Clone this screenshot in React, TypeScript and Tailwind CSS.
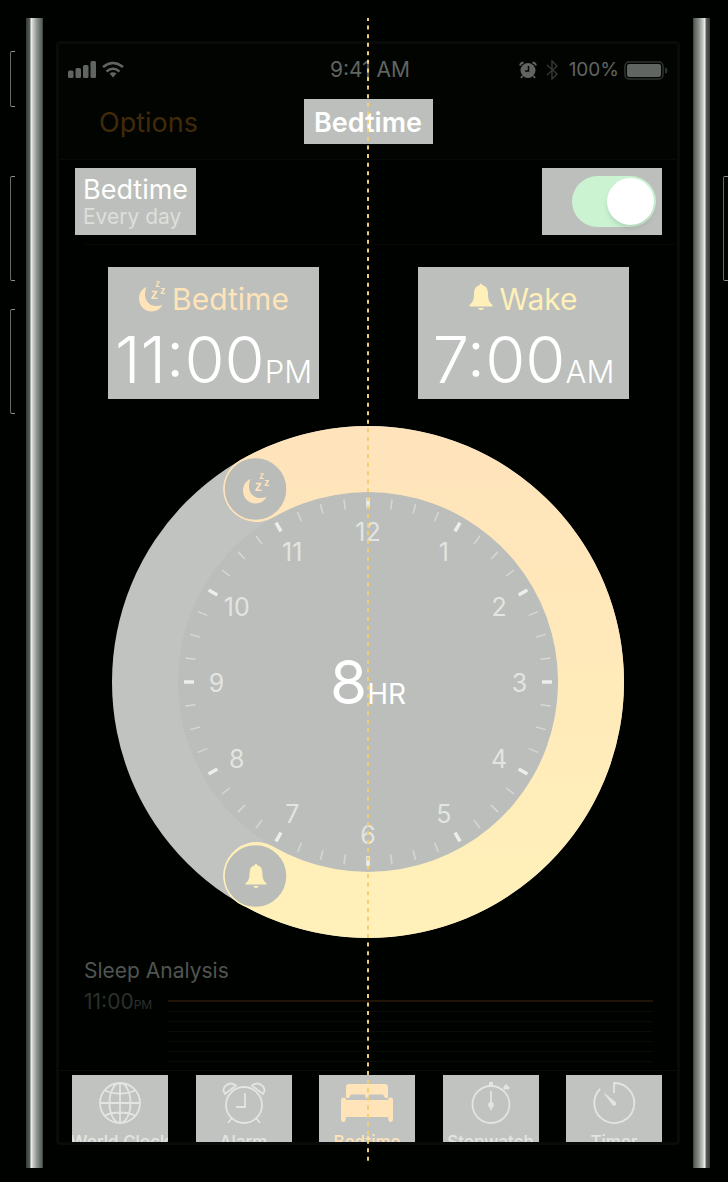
import React from "react";

const HOURS = [12, 1, 2, 3, 4, 5, 6, 7, 8, 9, 10, 11];

function Moon({ className }: { className: string }) {
  return (
    <svg viewBox="0 0 28 32" className={className} fill="currentColor" aria-hidden="true">
      <path d="M8.500 7C3.500 9 1 13.500 1 18.500C1 26 6.500 31.500 13.500 31.500C18.500 31.500 22.500 29 24.500 24.800C22.500 25.600 20.500 26 18.500 26C11.800 26 7 21.200 7 14.500C7 11.800 7.500 9.500 8.500 7Z" />
      <path d="M13.700 10.800H19.300V12L15.700 17.500H19.500V19H13.300V17.700L17 12.200H13.700ZM18 1.200H21.700V2.100L19.300 5.900H21.800V6.900H17.700V6L20.200 2.200H18ZM22.900 8H27V9L24.500 12.800H27.200V13.900H22.600V12.900L25.200 9.100H22.900Z" />
    </svg>
  );
}

function Bell({ className }: { className: string }) {
  return (
    <svg viewBox="0 0 24 28" className={className} fill="currentColor" aria-hidden="true">
      <path d="M12 .8c.9 0 1.500.6 1.500 1.500 3.600.8 5.200 3.600 5.400 7.200.3 6.500.5 9.300 4.600 12.300v1.600H.5v-1.600c4.100-3 4.300-5.800 4.600-12.300.2-3.600 1.800-6.400 5.400-7.200 0-.9.600-1.500 1.500-1.500Z" />
      <path d="M9 25h6c-.3 1.300-1.500 2-3 2s-2.700-.7-3-2Z" />
    </svg>
  );
}

function TimeCard({ icon, title, time, suffix, tone }: { icon: React.ReactNode; title: string; time: string; suffix: string; tone: string }) {
  return (
    <section className="flex h-[132px] w-[211px] flex-col items-center bg-[#bcbfbb] pt-[14px]">
      <h2 className={`flex items-center gap-[6px] text-[30px] leading-[36px] ${tone}`}>
        {icon}
        {title}
      </h2>
      <p className="flex items-baseline whitespace-nowrap text-white">
        <span className="text-[65px] font-light leading-[86px]">{time}</span>
        <span className="text-[31px] font-light">{suffix}</span>
      </p>
    </section>
  );
}

function Dial() {
  const point = (angle: number, r: number) => {
    const a = (angle * Math.PI) / 180;
    return [256 + r * Math.sin(a), 256 - r * Math.cos(a)];
  };
  return (
    <div className="relative mx-auto w-full max-w-[512px]">
      <svg viewBox="0 0 512 512" className="block w-full" role="img" aria-label="Sleep from 11 PM to 7 AM">
        <defs>
          <linearGradient id="sleep" x1="0" y1="0" x2="0" y2="1">
            <stop offset="0" stopColor="#ffe3bb" />
            <stop offset="1" stopColor="#fff1b9" />
          </linearGradient>
        </defs>
        <circle cx="256" cy="256" r="256" fill="#c0c3bf" />
        <circle cx="256" cy="256" r="190" fill="#bbbeba" />
        <path
          d="M128 34.300A256 256 0 1 1 128 477.700A33 33 0 0 1 161 420.500A190 190 0 1 0 161 91.500A33 33 0 0 1 128 34.300Z"
          fill="url(#sleep)"
        />
        <circle cx="143.500" cy="63" r="31.500" fill="#b9bcb8" stroke="#ffe4bb" strokeWidth="1.500" />
        <circle cx="143.500" cy="450" r="31.500" fill="#b9bcb8" stroke="#fff0b9" strokeWidth="1.500" />
        {Array.from({ length: 48 }, (_, i) => {
          const major = i % 4 === 0;
          const [x1, y1] = point(i * 7.5, 184);
          const [x2, y2] = point(i * 7.5, 174);
          return <line key={i} x1={x1} y1={y1} x2={x2} y2={y2} stroke={major ? "#eceeeb" : "#d5d8d4"} strokeWidth={major ? 3.5 : 1.5} />;
        })}
        {HOURS.map((hour, i) => {
          const [x, y] = point(i * 30, 151.5);
          return (
            <text key={hour} x={x} y={y + 10} textAnchor="middle" fontSize="25" fill="#e2e5e1">
              {hour}
            </text>
          );
        })}
      </svg>
      <p className="absolute inset-0 flex items-center justify-center text-white">
        <span className="flex items-baseline">
          <span className="text-[60px] leading-[72px]">8</span>
          <span className="text-[28px]">HR</span>
        </span>
      </p>
      <Moon className="absolute left-[130px] top-[46px] h-[32px] w-[28px] text-[#ffe4bb]" />
      <Bell className="absolute left-[133px] top-[437px] h-[26px] w-[22px] text-[#fff0b9]" />
    </div>
  );
}

const line = { fill: "none", stroke: "currentColor", strokeWidth: 1.8 };

const TABS = [
  {
    label: "World Clock",
    tone: "text-[#e3e5e2]",
    icon: (
      <g {...line}>
        <circle cx="27" cy="21" r="20" />
        <ellipse cx="27" cy="21" rx="10.500" ry="20" />
        <path d="M27 1V41M7 21H47M12 8.500C20 12.500 34 12.500 42 8.500M12 33.500C20 29.500 34 29.500 42 33.500" />
      </g>
    ),
  },
  {
    label: "Alarm",
    tone: "text-[#e3e5e2]",
    icon: (
      <g {...line}>
        <circle cx="27" cy="23" r="18" />
        <path d="M28 11V25H19M15 36L11 41M39 36L43 41M8 12C3 6 12-2 19 3.500ZM46 12C51 6 42-2 35 3.500Z" />
      </g>
    ),
  },
  {
    label: "Bedtime",
    tone: "text-[#ffe3b9]",
    icon: (
      <g fill="currentColor">
        <path d="M6 5Q6 2 9 2H45Q48 2 48 5V16Q44 16 44 14.500V14Q44 12.500 42 12.500H30Q28.500 12.500 28.500 14V16H25.500V14Q25.500 12.500 24 12.500H12Q10 12.500 10 14V14.500Q10 16 6 16Z" />
        <path d="M1 18Q1 15.500 3.500 15.500Q6 15.500 6 18H48Q48 15.500 50.500 15.500Q53 15.500 53 18V37Q53 40 50.500 40Q48 40 48 35H6Q6 40 3.500 40Q1 40 1 37Z" />
      </g>
    ),
  },
  {
    label: "Stopwatch",
    tone: "text-[#e3e5e2]",
    icon: (
      <g {...line}>
        <circle cx="27" cy="22.500" r="18.500" />
        <path d="M27 9V28" />
        <path d="M27 0V5" strokeWidth="4" />
        <path d="M40 7L42 5M41 3L45 7" strokeWidth="3" />
        <circle cx="27" cy="23" r="2" fill="currentColor" />
      </g>
    ),
  },
  {
    label: "Timer",
    tone: "text-[#e3e5e2]",
    icon: (
      <g {...line}>
        <path d="M27 11V1A20 20 0 1 1 13 7" />
        <path d="M17.500 11.500L29 21Q29 24 26 23Z" fill="currentColor" strokeWidth="1" />
      </g>
    ),
  },
];

function Rail({ flip }: { flip?: boolean }) {
  return (
    <div
      className={`w-[17px] shrink-0 bg-[linear-gradient(90deg,#343936_0px,#59605b_4px,#f5f7f4_5px,#c9ccc8_7px,#8b918b_11px,#565d57_16px,#343a36_17px)] ${flip ? "-scale-x-100" : ""}`}
    />
  );
}

const KEY = "w-[5px] rounded-l-[2px] border-y border-l border-y-[#8a8f8a] border-l-[#656b67]";

export default function App() {
  return (
    <div className="relative flex min-h-screen bg-[#000200] pt-[18px] pb-[14px] font-['Inter',sans-serif]">
      <div className="flex w-[26px] shrink-0 flex-col pl-[10px] pt-[33px]">
        <div className={`${KEY} h-[56px]`} />
        <div className={`${KEY} mt-[69px] h-[105px]`} />
        <div className={`${KEY} mt-[28px] h-[105px]`} />
      </div>
      <Rail />
      <div className="min-w-0 flex-1 px-[13px] pt-[23px] pb-[23px]">
        <main className="overflow-hidden rounded-[4px] border-[3px] border-[#080b09]">
          <header className="border-b border-[#080a08] bg-[#020402] pt-[10px] pb-[15px]">
            <div className="grid h-[32px] grid-cols-3 items-center px-[9px] text-[21px] text-[#606561]">
              <div className="flex items-center gap-[6px]">
                <svg viewBox="0 0 28 18" className="h-[18px] w-[28px]" fill="currentColor" aria-hidden="true">
                  <rect x="0" y="9.500" width="5.500" height="7.500" rx="1.500" />
                  <rect x="7.500" y="7" width="5.500" height="10" rx="1.500" />
                  <rect x="15" y="4" width="5.500" height="13" rx="1.500" />
                  <rect x="22.500" y="0" width="5.500" height="17" rx="1.500" />
                </svg>
                <svg viewBox="0 0 22 18" className="h-[18px] w-[22px]" fill="none" stroke="currentColor" strokeWidth="2.600" aria-hidden="true">
                  <path d="M1 6Q11-2 21 6M4.500 10.500Q11 5 17.500 10.500" />
                  <path d="M7.500 12.500Q11 10 14.500 12.500L11 16.500Z" fill="currentColor" stroke="none" />
                </svg>
              </div>
              <span className="pl-[4px] text-center">9:41 AM</span>
              <div className="flex items-center justify-end">
                <svg viewBox="0 0 18 18" className="mr-[9px] h-[18px] w-[18px] shrink-0" aria-hidden="true">
                  <circle cx="9" cy="9.500" r="7.500" fill="currentColor" />
                  <path d="M1 4.500Q1.500 2 4.500 1.500M17 4.500Q16.500 2 13.500 1.500M3.500 15L2 17M14.500 15L16 17" fill="none" stroke="currentColor" strokeWidth="1.800" />
                  <path d="M9.500 5V10H6" fill="none" stroke="#020402" strokeWidth="1.500" />
                </svg>
                <svg viewBox="0 0 12 20" className="mr-[11px] h-[20px] w-[12px] shrink-0 text-[#343935]" fill="none" stroke="currentColor" strokeWidth="1.400" aria-hidden="true">
                  <path d="M1 5L11 14L6 19V1L11 6L1 15" />
                </svg>
                <span className="mr-[5px] text-[19px]">100%</span>
                <svg viewBox="0 0 44 19" className="h-[19px] w-[44px] shrink-0" aria-hidden="true">
                  <rect x="1" y="1" width="38" height="17" rx="4" fill="none" stroke="#303531" strokeWidth="1.500" />
                  <rect x="3" y="3" width="34" height="13" rx="2" fill="#606561" />
                  <path d="M41 6.500Q43.500 7 43.500 9.500Q43.500 12 41 12.500Z" fill="#303531" />
                </svg>
              </div>
            </div>
            <nav className="mt-[13px] grid h-[45px] grid-cols-[1fr_129px_1fr] items-center">
              <a href="#options" className="pl-[40px] pt-[4px] text-[27px] text-[#422a09]">
                Options
              </a>
              <h1 className="h-[45px] bg-[#bcbfbb] text-center text-[27px] font-semibold leading-[48px] text-white">Bedtime</h1>
            </nav>
          </header>

          <div className="flex h-[84px] items-start justify-between pl-[16px] pr-[15px] pt-[8px]">
            <label htmlFor="bedtime" className="h-[67px] w-[121px] bg-[#bcbfbb] px-[8px] pt-[6px] text-[27px] leading-[31px] text-white">
              Bedtime
              <span className="block text-[21px] leading-[24px] text-[#dddfdc]">Every day</span>
            </label>
            <div className="flex h-[67px] w-[120px] items-center justify-end bg-[#bcbfbb] pr-[6px]">
              <input
                id="bedtime"
                type="checkbox"
                role="switch"
                defaultChecked
                className="flex h-[51px] w-[84px] appearance-none items-center rounded-full bg-[#b1b4b0] p-[2px] before:block before:h-[47px] before:w-[47px] before:rounded-full before:bg-white before:shadow-md checked:justify-end checked:bg-[#cbf3d2]"
              />
            </div>
          </div>
          <hr className="ml-[25px] border-[#060806]" />

          <div className="mt-[22px] flex justify-between pl-[49px] pr-[48px]">
            <TimeCard icon={<Moon className="h-[32px] w-[28px] -translate-y-[3px]" />} title="Bedtime" time="11:00" suffix="PM" tone="text-[#ffe3b9]" />
            <TimeCard icon={<Bell className="h-[28px] w-[24px] -translate-y-[2px]" />} title="Wake" time="7:00" suffix="AM" tone="text-[#fff0b9]" />
          </div>

          <div className="mt-[27px]">
            <Dial />
          </div>

          <section className="h-[132px] pl-[25px] pr-[24px] pt-[18px]">
            <h2 className="text-[21px] leading-[30px] text-[#505551]">Sleep Analysis</h2>
            <div className="flex">
              <p className="w-[84px] text-[21px] leading-[32px] text-[#2b302c]">
                11:00<span className="text-[12px]">PM</span>
              </p>
              <div className="mt-[14px] flex flex-1 flex-col gap-[9px]">
                <hr className="border-t-2 border-[#211305]" />
                {[0, 1, 2, 3, 4, 5].map((n) => (
                  <hr key={n} className="border-[#080b09]" />
                ))}
              </div>
            </div>
          </section>

          <nav className="flex h-[72px] justify-between overflow-hidden border-t border-[#0a0d0b] pl-[13px] pr-[15px] pt-[4px]">
            {TABS.map((tab) => (
              <button key={tab.label} type="button" className={`flex w-[96px] flex-col items-center overflow-hidden bg-[#c0c3bf] pt-[7px] ${tab.tone}`}>
                <svg viewBox="0 0 54 44" className="h-[44px] w-[54px] shrink-0 overflow-visible" aria-hidden="true">
                  {tab.icon}
                </svg>
                <span className="mt-[6px] whitespace-nowrap text-[17px] font-medium leading-[20px]">{tab.label}</span>
              </button>
            ))}
          </nav>
        </main>
      </div>
      <Rail flip />
      <div className="w-[18px] shrink-0 pl-[13px] pt-[158px]">
        <div className={`${KEY} h-[105px]`} />
      </div>
      <svg className="pointer-events-none absolute left-[367px] top-[18px] h-[1147px] w-[2px]" aria-hidden="true">
        <line x1="1" y1="0" x2="1" y2="100%" stroke="#f2ce72" strokeWidth="2" strokeDasharray="4 4.570" strokeDashoffset="1" />
      </svg>
    </div>
  );
}
